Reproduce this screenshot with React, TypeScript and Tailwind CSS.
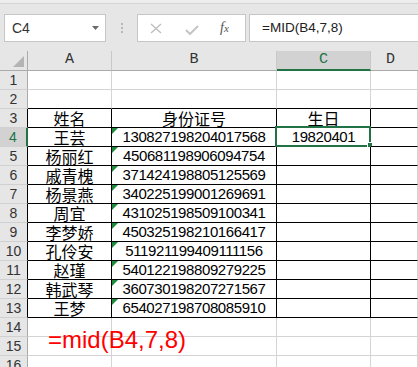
const names = ['王芸', '杨丽红', '戚青槐', '杨景燕', '周宜', '李梦娇', '孔伶安', '赵瑾', '韩武琴', '王梦'];
const ids = [
  '130827198204017568',
  '450681198906094754',
  '371424198805125569',
  '340225199001269691',
  '431025198509100341',
  '450325198210166417',
  '511921199409111156',
  '540122198809279225',
  '360730198207271567',
  '654027198708085910',
];

const cjk = "font-['Noto_Sans_CJK_SC',sans-serif] text-[16px]";
const num = "font-['Liberation_Sans',sans-serif] text-[15px] tracking-[-0.4px]";

function Toolbar() {
  return (
    <>
      <div className="h-[4px] bg-[#ededed] border-b border-[#d4d4d4]" />
      <div className="h-[47px] bg-[#e6e6e6] flex items-start pt-[10px]">
        {/* name box */}
        <div className="ml-[4px] w-[102px] h-[28px] bg-white border border-[#c6c6c6] flex items-center pl-[7px] pr-[6px]">
          <span className="flex-1 text-[14px] text-[#333]">C4</span>
          <svg width="7" height="4" viewBox="0 0 7 4">
            <polygon points="0,0 7,0 3.5,4" fill="#6b6b6b" />
          </svg>
        </div>
        {/* grip dots */}
        <div className="w-[31px] h-[28px] flex flex-col items-center justify-center gap-[2px]">
          <div className="w-[2px] h-[2px] bg-[#b8b8b8]" />
          <div className="w-[2px] h-[2px] bg-[#b8b8b8]" />
          <div className="w-[2px] h-[2px] bg-[#b8b8b8]" />
        </div>
        {/* cancel / enter / fx */}
        <div className="w-[109px] h-[28px] bg-white border border-[#c6c6c6] flex items-center">
          <svg width="12" height="11" viewBox="0 0 12 11" className="ml-[12px]">
            <path d="M1 1 L11 10 M11 1 L1 10" stroke="#bdbdbd" strokeWidth="1.3" fill="none" />
          </svg>
          <svg width="14" height="10" viewBox="0 0 14 10" className="ml-[23px] mt-[3px]">
            <path d="M1 5 L5 9 L13 1" stroke="#c4c4c4" strokeWidth="2" fill="none" />
          </svg>
          <span className="ml-[21px] font-['Liberation_Serif',serif] italic text-[14px] text-[#555] leading-none">
            f<span className="text-[11px]">x</span>
          </span>
        </div>
        {/* formula input */}
        <div className="ml-[3px] flex-1 -mr-[4px] h-[28px] bg-white border border-[#c6c6c6] flex items-center pl-[12px]">
          <span className="text-[13.5px] text-[#222]">=MID(B4,7,8)</span>
        </div>
      </div>
    </>
  );
}

function HeaderRow() {
  const letter = "font-['Liberation_Mono',monospace] text-[15px] text-[#333]";
  return (
    <>
      <div className="relative h-[20px] bg-[#e6e6e6] border-r border-b border-[#ababab]">
        <svg width="11" height="11" viewBox="0 0 11 11" className="absolute left-[13px] top-[5px]">
          <polygon points="11,0 11,11 0,11" fill="#b4b4b4" />
        </svg>
      </div>
      <div className={`h-[20px] bg-[#e6e6e6] border-r border-r-[#c8c8c8] border-b border-b-[#ababab] flex items-center justify-center ${letter}`}>A</div>
      <div className={`h-[20px] bg-[#e6e6e6] border-r border-r-[#c8c8c8] border-b border-b-[#ababab] flex items-center justify-center ${letter}`}>B</div>
      <div className="h-[20px] bg-[#d2d2d2] border-r border-r-[#c8c8c8] border-b-2 border-b-[#217346] flex items-center justify-center font-['Liberation_Mono',monospace] text-[15px] text-[#217346]">
        C
      </div>
      <div className={`h-[20px] bg-[#e6e6e6] border-b border-b-[#ababab] flex items-center justify-center pr-[8px] ${letter}`}>D</div>
    </>
  );
}

function DataRow({ r }: { r: number }) {
  const inTable = r >= 3 && r <= 13;
  const topEdge = r >= 2 && r <= 13;
  const idx = r - 4;
  const selected = r === 4;

  const headCls = selected
    ? 'bg-[#d2d2d2] text-[#217346] border-r-2 border-r-[#217346]'
    : inTable
      ? 'bg-[#e6e6e6] text-[#333] border-r border-r-black'
      : 'bg-[#e6e6e6] text-[#333] border-r border-r-[#ababab]';

  const cellCls = (c: string) => {
    const b = topEdge ? 'border-b-black' : 'border-b-[#d4d4d4]';
    const rr = inTable && c !== 'D' ? 'border-r-black' : 'border-r-[#d4d4d4]';
    return `relative h-[19px] border-b border-r ${b} ${rr} flex items-center justify-center whitespace-nowrap leading-[18px]`;
  };

  let a: React.ReactNode = null;
  let b: React.ReactNode = null;
  let c: React.ReactNode = null;
  if (r === 3) {
    a = <span className={cjk}>姓名</span>;
    b = <span className={cjk}>身份证号</span>;
    c = <span className={cjk}>生日</span>;
  } else if (r >= 4 && r <= 13) {
    a = <span className={cjk}>{names[idx]}</span>;
    b = (
      <>
        <div className="absolute left-0 top-0 w-0 h-0 border-t-[6px] border-t-[#1e8c3e] border-r-[6px] border-r-transparent" />
        <span className={num}>{ids[idx]}</span>
      </>
    );
  }
  if (selected) {
    c = (
      <>
        <span className={num}>19820401</span>
        <div className="absolute -left-[2px] -top-[2px] -right-[1px] -bottom-[1px] border-2 border-[#217346]" />
        <div className="absolute -right-[3px] -bottom-[2px] w-[6px] h-[6px] bg-[#217346] border border-white" />
      </>
    );
  }

  return (
    <>
      <div className={`h-[19px] border-b border-b-[#d0d0d0] flex items-center justify-center font-['Liberation_Sans',sans-serif] text-[14px] ${headCls}`}>
        {r}
      </div>
      <div className={cellCls('A')}>
        {a}
        {r === 14 && (
          <span className="absolute left-[20px] top-[10px] z-10 text-[24px] leading-[24px] text-[#ff0000] font-['Liberation_Sans',sans-serif] whitespace-nowrap">
            =mid(B4,7,8)
          </span>
        )}
      </div>
      <div className={cellCls('B')}>{b}</div>
      <div className={cellCls('C')}>{c}</div>
      <div className={cellCls('D')} />
    </>
  );
}

export default function App() {
  const rows = Array.from({ length: 16 }, (_, i) => i + 1);
  return (
    <div className="w-[418px] h-[367px] overflow-hidden bg-white font-['Liberation_Sans',sans-serif] text-black">
      <Toolbar />
      <div className="grid grid-cols-[28px_84px_165px_94px_1fr]">
        <HeaderRow />
        {rows.map((r) => (
          <DataRow key={r} r={r} />
        ))}
      </div>
    </div>
  );
}
